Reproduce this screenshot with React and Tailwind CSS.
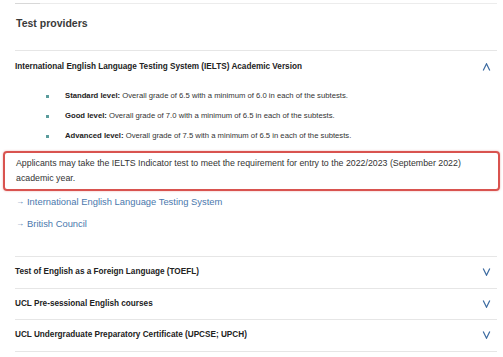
import React from 'react';

const levels = [
  { name: 'Standard level:', text: 'Overall grade of 6.5 with a minimum of 6.0 in each of the subtests.' },
  { name: 'Good level:', text: 'Overall grade of 7.0 with a minimum of 6.5 in each of the subtests.' },
  { name: 'Advanced level:', text: 'Overall grade of 7.5 with a minimum of 6.5 in each of the subtests.' },
];

const others = [
  'Test of English as a Foreign Language (TOEFL)',
  'UCL Pre-sessional English courses',
  'UCL Undergraduate Preparatory Certificate (UPCSE; UPCH)',
];

const Chevron = ({ up }) => (
  <svg width="9" height="8" viewBox="0 0 9 8" className="text-[#3b6aa0]">
    <path
      d={up ? 'M1.2 7.5 L4.5 0.8 L7.8 7.5' : 'M1.2 0.5 L4.5 7.2 L7.8 0.5'}
      fill="none"
      stroke="currentColor"
      strokeWidth="1.2"
    />
  </svg>
);

const App = () => {
  return (
    <div className="w-[503px] h-[357px] bg-white overflow-hidden font-['Liberation_Sans',Arial,sans-serif] text-[#333]">
      <div className="pt-[3px] pl-[15px] pr-[6px]">
        <div className="border-t border-[#ececec] relative">
          <div className="absolute left-0 top-[-1px] w-[25px] h-px bg-[#d8d8d8]" />
        </div>

        <div className="h-[46px] flex items-center">
          <h2 className="font-bold text-[10.5px] text-[#3a3a3a] ml-px -mt-[6px]">Test providers</h2>
        </div>

        <div className="border-t border-[#e6e6e6]">
          <div className="h-[32px] flex items-center justify-between pr-[6px]">
            <span className="font-bold text-[8.2px] text-[#222]">
              International English Language Testing System (IELTS) Academic Version
            </span>
            <Chevron up />
          </div>

          <ul className="mt-[7px] flex flex-col gap-[8px]">
            {levels.map((l) => (
              <li key={l.name} className="h-[12px] flex items-center text-[7.7px]">
                <span className="w-[3px] h-[3px] bg-[#5b9c9c] ml-[31px] mr-[16px]" />
                <span>
                  <strong className="font-bold text-[#222]">{l.name}</strong> {l.text}
                </span>
              </li>
            ))}
          </ul>

          <div className="mt-[9px] -ml-[12px] -mr-[3px] h-[40px] border-2 border-[#d9534f] rounded-[4px] shadow-[0_0_2px_rgba(217,83,79,0.5)] px-[11px] pt-[3px] text-[8.8px] leading-[15px] text-[#333]">
            Applicants may take the IELTS Indicator test to meet the requirement for entry to the 2022/2023 (September 2022) academic year.
          </div>

          <div className="flex flex-col text-[9.4px] text-[#4a78ad]">
            <a className="h-[22px] flex items-center ml-px">
              <span className="mr-[3px] text-[8px]">→</span>International English Language Testing System
            </a>
            <a className="h-[22px] flex items-center ml-px">
              <span className="mr-[3px] text-[8px]">→</span>British Council
            </a>
          </div>
        </div>

        <div className="mt-[21px] border-t border-[#e6e6e6]">
          {others.map((o) => (
            <div key={o} className="h-[31.5px] flex items-center justify-between pr-[6px] border-b border-[#e6e6e6]">
              <span className="font-bold text-[8.2px] text-[#222]">{o}</span>
              <Chevron />
            </div>
          ))}
        </div>
      </div>
    </div>
  );
};

export default App;
